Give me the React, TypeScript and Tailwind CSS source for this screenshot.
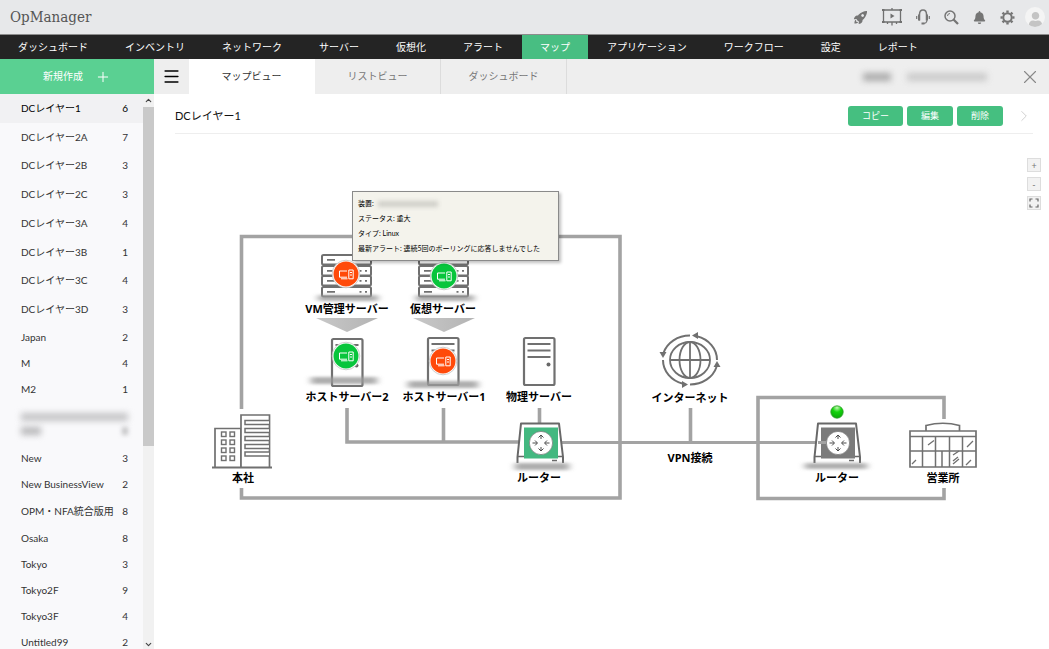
import { useState } from 'react';
import { Menu, Plus, X, ChevronRight, ChevronUp, ChevronDown } from 'lucide-react';
import { FaBell, FaUser } from 'react-icons/fa';
import { IoRocketSharp } from 'react-icons/io5';

const menu = [
  'ダッシュボード',
  'インベントリ',
  'ネットワーク',
  'サーバー',
  '仮想化',
  'アラート',
  'マップ',
  'アプリケーション',
  'ワークフロー',
  '設定',
  'レポート',
];

const tabs = ['マップビュー', 'リストビュー', 'ダッシュボード'];

const layers = [
  { name: 'DCレイヤー1', count: 6 },
  { name: 'DCレイヤー2A', count: 7 },
  { name: 'DCレイヤー2B', count: 3 },
  { name: 'DCレイヤー2C', count: 3 },
  { name: 'DCレイヤー3A', count: 4 },
  { name: 'DCレイヤー3B', count: 1 },
  { name: 'DCレイヤー3C', count: 4 },
  { name: 'DCレイヤー3D', count: 3 },
];

const views = [
  { name: 'Japan', count: 2 },
  { name: 'M', count: 4 },
  { name: 'M2', count: 1 },
  { name: '', count: 0 },
  { name: 'New', count: 3 },
  { name: 'New BusinessView', count: 2 },
  { name: 'OPM・NFA統合版用', count: 8, tall: true },
  { name: 'Osaka', count: 8 },
  { name: 'Tokyo', count: 3 },
  { name: 'Tokyo2F', count: 9 },
  { name: 'Tokyo3F', count: 4 },
  { name: 'Untitled99', count: 2 },
];

// x is the centre of the label, y its top edge
const labels = [
  { text: 'VM管理サーバー', x: 193, y: 167 },
  { text: '仮想サーバー', x: 289, y: 167 },
  { text: 'ホストサーバー2', x: 193, y: 255 },
  { text: 'ホストサーバー1', x: 290, y: 255 },
  { text: '物理サーバー', x: 385, y: 255 },
  { text: 'ルーター', x: 385, y: 336 },
  { text: '本社', x: 89, y: 336 },
  { text: 'インターネット', x: 536, y: 256 },
  { text: 'VPN接続', x: 536, y: 316 },
  { text: 'ルーター', x: 683, y: 336 },
  { text: '営業所', x: 789, y: 336 },
];

type Point = { x: number; y: number };

function PresentationIcon() {
  return (
    <svg width="20" height="18" viewBox="0 0 20 18" fill="none" stroke="#707070" strokeWidth="1.3">
      <path d="M1.500 2h17v12h-17z" />
      <path d="M0 2h2.500M17.500 2H20M0 14h2.500M17.500 14H20" strokeWidth="2" />
      <path d="M8.500 5.500l4 2.500-4 2.500z" fill="#707070" stroke="none" />
      <path d="M5.500 14v2M10 0v2M10 14v3.500M14.500 14v2" />
    </svg>
  );
}

function HeadsetIcon() {
  return (
    <svg width="14" height="16" viewBox="0 0 14 16" fill="none" stroke="#757575" strokeWidth="1.5">
      <path d="M3.500 11.500V5.500C3.500 2.500 5 1 7 1s3.500 1.500 3.500 4.500v6" />
      <path d="M3 5.500v6M11 5.500v6" strokeWidth="2" />
      <path d="M0.700 7v3M13.300 7v3" strokeWidth="1.2" />
      <path d="M11 11.500q-0.500 3-4 3" strokeWidth="1.200" />
      <path d="M5.500 14.500h3" strokeWidth="2" />
    </svg>
  );
}

function SearchIcon() {
  return (
    <svg width="15" height="15" viewBox="0 0 15 15" fill="none" stroke="#757575">
      <circle cx="6" cy="6" r="5" strokeWidth="1.500" />
      <path d="M3.500 6A2.500 2.500 0 0 1 6 3.500" strokeWidth="1" />
      <path d="M9.500 9.500l4.500 4.500" strokeWidth="2.300" />
    </svg>
  );
}

function GearIcon() {
  return (
    <svg width="15" height="15" viewBox="-7.500 -7.500 15 15" fill="none" stroke="#757575">
      <circle r="4.200" strokeWidth="2" />
      {[0, 45, 90, 135, 180, 225, 270, 315].map((angle) => (
        <path key={angle} d="M0 -4.800V-7" strokeWidth="2.400" transform={`rotate(${angle})`} />
      ))}
    </svg>
  );
}

function Rack({ x, y }: Point) {
  return (
    <g transform={`translate(${x} ${y})`} stroke="#707070">
      {[0, 11, 21, 32].map((top) => (
        <g key={top}>
          <rect x="1" y={top + 1} width="49" height="9.5" rx="1.5" fill="#fff" strokeWidth="2" />
          <path d={`M6 ${top + 5.8}h8M38.5 ${top + 5.8}h2M44 ${top + 5.8}h2`} strokeWidth="1.8" />
        </g>
      ))}
    </g>
  );
}

function Tower({ x, y }: Point) {
  return (
    <g transform={`translate(${x} ${y})`} stroke="#707070">
      <rect x="1" y="1" width="30.5" height="47" rx="1.5" fill="#fff" strokeWidth="2.200" />
      <path d="M4.500 7h23M4.500 13.500h23M4.500 20h23" strokeWidth="1.800" />
      <circle cx="25.500" cy="27.500" r="2" fill="#686868" stroke="none" />
    </g>
  );
}

function Status({ x, y, color }: Point & { color: string }) {
  return (
    <g transform={`translate(${x} ${y})`} fill="none" stroke="#fff">
      <circle r="13.800" fill="#fff" stroke="#c2c2c2" strokeWidth="0.800" />
      <circle r="12.500" fill={color} stroke="none" />
      <path d="M1 3.200h-7.500v-6.200H1M-5 4.800h6.500" strokeWidth="1" />
      <path d="M2.800 -4h4.400v8.800H2.800zM4 -1.500h2M4 1h2" strokeWidth="1" />
    </g>
  );
}

function Router({ x, y, color }: Point & { color: string }) {
  return (
    <g transform={`translate(${x} ${y})`} fill="none">
      <path d="M-23.500 20v-6L-20 -19.500h38L22 14v6" fill="#fff" stroke="#686868" strokeWidth="2" strokeLinejoin="round" />
      <path d="M-23 13.500h45M11 17.500h5" stroke="#686868" strokeWidth="1.600" />
      <path d="M-17 -15.500h34v31h-34z" fill={color} />
      <circle r="11.600" fill="#fff" stroke="#777" strokeWidth="0.700" />
      <g stroke="#4a4a4a" strokeWidth="1">
        <path d="M0 -4v-4M-2.500 -5.500L0 -8l2.500 2.500" />
        <path d="M0 4v4M-2.500 5.500L0 8l2.500 -2.500" />
        <path d="M-8.500 0h4.500M-6 -2.500L-3.500 0l-2.500 2.500" />
        <path d="M8.500 0h-4.500M6 -2.500L3.500 0l2.500 2.500" />
      </g>
    </g>
  );
}

function HeadOffice({ x, y }: Point) {
  return (
    <g transform={`translate(${x} ${y})`} fill="#fff" stroke="#707070">
      <path d="M3 53V14.500h26V53" strokeWidth="1.700" />
      <path d="M29 53V1h28.500v52" strokeWidth="1.700" />
      <path d="M0 53.500h60" strokeWidth="2" />
      {[18, 26, 34, 42].map((top) => (
        <g key={top} strokeWidth="1.400">
          <rect x="9.500" y={top} width="4.500" height="4.500" />
          <rect x="18" y={top} width="4.500" height="4.500" />
        </g>
      ))}
      {[6.5, 14.5, 22.5, 30.5, 38].map((top) => (
        <path key={top} d={`M57 ${top}H33v4h24`} strokeWidth="1.5" />
      ))}
    </g>
  );
}

function BranchOffice({ x, y }: Point) {
  return (
    <g transform={`translate(${x} ${y})`} fill="none" stroke="#707070" strokeWidth="1.700">
      <path d="M17 8V2.500Q34 -2 50.500 2.500V8" />
      <path d="M1 8h66v36H1zM1 13.500h66M1 28h66" fill="#fff" />
      <path d="M13.500 13.500V44M26.500 13.500V44M40.500 13.500V44M53.500 13.500V44M33 28v16" strokeWidth="1.500" />
      <path d="M19 22l6 -4.500M58 24l6 -6M3 41l4 -4M44 32l6 -4M44 41l6 -5M44 38l5 -4M57 42l5 -5" strokeWidth="1.300" />
    </g>
  );
}

function Globe({ x, y }: Point) {
  return (
    <g transform={`translate(${x} ${y})`} fill="none" stroke="#707070" strokeWidth="1.800">
      <ellipse rx="20" ry="18" />
      <ellipse rx="10.500" ry="18" />
      <path d="M0 -18v36M-20 0h40" />
      <path
        d="M0 -24.500A27.500 24.500 0 0 0 -26.500 -7M-27 0A27.500 24.500 0 0 0 -7 23.700M0 24.500A27.500 24.500 0 0 0 26.500 7M27 0A27.500 24.500 0 0 0 7 -23.700"
        strokeWidth="2"
      />
      <g fill="#707070" stroke="none">
        <path d="M2 -24.500l6 -3.500v7z" />
        <path d="M-27 -2l-3.500 -6h7z" />
        <path d="M-2 24.500l-6 -3.500v7z" />
        <path d="M27 1l-3.500 6h7z" />
      </g>
    </g>
  );
}

function Topology() {
  return (
    <svg width="895" height="515" viewBox="0 0 895 515" className="absolute top-0 left-0">
      <defs>
        <filter id="soft" x="-20%" y="-100%" width="140%" height="300%">
          <feGaussianBlur stdDeviation="3.500 1.800" />
        </filter>
        <linearGradient id="arrow" x1="0" x2="1" y1="0" y2="0">
          <stop offset="0" stopColor="#c8c8c8" />
          <stop offset="1" stopColor="#b4b4b4" />
        </linearGradient>
        <radialGradient id="lamp" cx="0.500" cy="0.150" r="0.800">
          <stop offset="0" stopColor="#c5f7b5" />
          <stop offset="0.450" stopColor="#14d40c" />
          <stop offset="1" stopColor="#0cab0a" />
        </radialGradient>
      </defs>

      {/* site borders */}
      <g fill="none" stroke="#a3a3a3" strokeWidth="3.600">
        <path d="M87.500 275V102.500H466V364H87.500V354" />
        <path d="M790 285V263.500H604V364.500H790V354" />
      </g>

      {/* links */}
      <g fill="none" stroke="#a3a3a3" strokeWidth="3.600">
        <path d="M193 274V308H365M289.500 274V308M385.500 274V290M536.500 274V308" />
        <path d="M405 308.500H668" strokeWidth="3" />
      </g>

      <Rack x={167} y={120} />
      <Rack x={264} y={120} />
      <path d="M162 184h62l-31 14z" fill="url(#arrow)" />
      <path d="M259 184h62l-31 14z" fill="url(#arrow)" />
      <Tower x={177} y={204} />
      <Tower x={273} y={203} />
      <Tower x={369} y={203} />

      <Router x={387} y={309} color="#43b880" />
      <Router x={684} y={309} color="#7b7b7b" />
      <path d="M664 308.500H672" stroke="#a3a3a3" strokeWidth="3" />
      <HeadOffice x={58} y={280} />
      <BranchOffice x={755} y={289} />
      <Globe x={536} y={226} />
      <circle cx="683" cy="278" r="6.200" fill="url(#lamp)" stroke="#2f9c2a" strokeWidth="0.800" />

      {/* masked device names */}
      <g fill="#9a9a9a" filter="url(#soft)" opacity="0.800">
        <rect x="164" y="161" width="60" height="6" />
        <rect x="262" y="161" width="58" height="6" />
        <rect x="157" y="243" width="66" height="7" />
        <rect x="254" y="247" width="70" height="7" />
        <rect x="361" y="329" width="54" height="7" />
        <rect x="651" y="329" width="62" height="6" />
      </g>

      <Status x={192} y={140} color="#ff4a0a" />
      <Status x={290} y={142} color="#08c53c" />
      <Status x={192} y={222} color="#08c53c" />
      <Status x={289} y={227} color="#ff4a0a" />
    </svg>
  );
}

export default function App() {
  const [tab, setTab] = useState(tabs[0]);
  const [selected, setSelected] = useState(layers[0].name);

  return (
    <div className="flex h-screen flex-col overflow-hidden bg-white font-['Lato','Noto_Sans_CJK_JP',sans-serif] text-[10px] text-[#333]">
      <header className="flex h-[35px] shrink-0 items-center justify-between border-b border-[#8c8c8c] bg-[#e7e8ea] pr-1 pl-2.5">
        <h1 className="font-['DejaVu_Serif_Condensed','DejaVu_Serif',serif] text-[15px] leading-none text-[#555]">OpManager</h1>
        <div className="flex items-center gap-3.5 text-[#757575]">
          <button aria-label="Quick start"><IoRocketSharp size={15} /></button>
          <button aria-label="Presentation"><PresentationIcon /></button>
          <button aria-label="Support"><HeadsetIcon /></button>
          <button aria-label="Search"><SearchIcon /></button>
          <button aria-label="Alarms"><FaBell size={13} /></button>
          <button aria-label="Settings"><GearIcon /></button>
          <button
            aria-label="Account"
            className="-ml-1 flex size-5 items-end justify-center overflow-hidden rounded-full bg-[#f4f4f4] text-[#c4c4c4]"
          >
            <FaUser size={15} />
          </button>
        </div>
      </header>

      <nav className="flex h-6 shrink-0 gap-px bg-[#242424] text-white">
        {menu.map((item) => (
          <a
            key={item}
            href="#"
            className={`flex items-center px-[18px] whitespace-nowrap ${item === 'マップ' ? 'bg-[#48be82]' : ''}`}
          >
            {item}
          </a>
        ))}
      </nav>

      <div className="flex min-h-0 flex-1">
        <aside className="flex w-[154px] shrink-0 flex-col">
          <button className="flex h-[35px] shrink-0 items-center justify-center gap-3 bg-[#5ad092] text-white">
            新規作成
            <Plus size={16} strokeWidth={1.5} />
          </button>
          <div className="flex min-h-0 flex-1">
            <div className="min-w-0 flex-1 overflow-hidden bg-[#f9f9fb]">
              <ul className="grid h-[230px] auto-rows-fr">
                {layers.map((item) => (
                  <li key={item.name} className="flex">
                    <button
                      onClick={() => setSelected(item.name)}
                      className={`flex flex-1 items-center justify-between pr-[15px] pl-[21px] ${
                        selected === item.name ? 'bg-[#f1f1f3] text-black' : ''
                      }`}
                    >
                      <span>{item.name}</span>
                      <span>{item.count}</span>
                    </button>
                  </li>
                ))}
              </ul>
              <ul>
                {views.map((item) =>
                  item.name ? (
                    <li key={item.name}>
                      <button
                        onClick={() => setSelected(item.name)}
                        className={`flex w-full items-center justify-between pr-[15px] pl-[21px] whitespace-nowrap ${
                          item.tall ? 'h-7' : 'h-[26px]'
                        }`}
                      >
                        <span>{item.name}</span>
                        <span>{item.count}</span>
                      </button>
                    </li>
                  ) : (
                    <li key="masked" className="flex h-[43px] flex-col justify-center gap-1.5 pr-[15px] pl-[21px]">
                      <div className="h-2 bg-[#c4c4c6] blur-[3px]" />
                      <div className="flex justify-between">
                        <div className="h-2 w-5 bg-[#b8b8ba] blur-[3px]" />
                        <div className="h-2 w-1.5 bg-[#c4c4c6] blur-[2px]" />
                      </div>
                    </li>
                  ),
                )}
              </ul>
            </div>
            <div className="flex w-[11px] shrink-0 flex-col items-center bg-[#f1f1f1] text-[#444]">
              <ChevronUp size={9} strokeWidth={3} className="my-0.5 shrink-0" />
              <div className="w-full flex-[340] bg-[#c9c9c9]" />
              <div className="flex-[194]" />
              <ChevronDown size={9} strokeWidth={3} className="shrink-0" />
            </div>
          </div>
        </aside>

        <main className="flex min-w-0 flex-1 flex-col">
          <div className="flex h-[35px] shrink-0 items-stretch bg-[#eee]">
            <button aria-label="Menu" className="flex w-[35px] items-center justify-center text-black">
              <Menu size={19} strokeWidth={2} />
            </button>
            {tabs.map((name) => (
              <button
                key={name}
                onClick={() => setTab(name)}
                className={`w-[126px] border-r ${
                  tab === name ? 'border-white bg-white text-[#333]' : 'border-[#dcdcdc] text-[#777]'
                }`}
              >
                {name}
              </button>
            ))}
            <div className="ml-auto flex items-center gap-4 pr-2">
              <div className="h-2 w-7 bg-[#ababab] blur-[3px]" />
              <div className="h-2 w-20 bg-[#cacaca] blur-[3px]" />
              <button aria-label="Close" className="ml-4 text-[#888]">
                <X size={22} strokeWidth={1.2} />
              </button>
            </div>
          </div>

          <div className="mr-4 ml-[21px] flex h-10 shrink-0 items-center justify-between border-b border-[#eee]">
            <h2 className="pt-1.5 text-[11px] text-[#111]">DCレイヤー1</h2>
            <div className="flex items-center gap-1 pt-1 text-[9px] text-white">
              <button className="h-5 rounded-[3px] bg-[#45bf80] px-3.5">コピー</button>
              <button className="h-5 rounded-[3px] bg-[#45bf80] px-3.5">編集</button>
              <button className="h-5 rounded-[3px] bg-[#45bf80] px-3.5">削除</button>
              <button aria-label="Next" className="ml-2 text-[#ccc]">
                <ChevronRight size={18} strokeWidth={1.2} />
              </button>
            </div>
          </div>

          <div className="relative min-h-0 flex-1 overflow-hidden">
            <Topology />
            {labels.map((label) => (
              <span
                key={`${label.text}-${label.x}`}
                className="absolute -translate-x-1/2 font-['Open_Sans','Noto_Sans_CJK_JP',sans-serif] text-[11px] leading-4 font-bold whitespace-nowrap text-black"
                style={{ left: label.x, top: label.y }}
              >
                {label.text}
              </span>
            ))}

            <div
              role="tooltip"
              className="absolute top-[57px] left-[198px] w-[207px] border border-[#8a8a8a] bg-[#f4f3ec] px-[5px] py-1 text-[7px] leading-[15px] whitespace-nowrap text-black shadow-[2px_2px_3px_rgba(0,0,0,0.25)]"
            >
              <div className="flex items-center gap-1">
                装置:
                <span className="h-1.5 w-15 bg-[#d0cfc9] blur-[2px]" />
              </div>
              <div>ステータス: 重大</div>
              <div>タイプ: Linux</div>
              <div>最新アラート: 連続5回のポーリングに応答しませんでした</div>
            </div>

            <div className="absolute top-6 right-2 flex flex-col gap-[5px] text-[9px] leading-none text-[#777]">
              <button className="size-3.5 border border-[#ddd] bg-[#f2f2f2]">+</button>
              <button className="size-3.5 border border-[#ddd] bg-[#f2f2f2]">-</button>
              <button aria-label="Full screen" className="flex size-3.5 items-center justify-center border border-[#ddd] bg-[#f2f2f2]">
                <svg width="10" height="10" viewBox="0 0 10 10" fill="none" stroke="#666" strokeWidth="1.200">
                  <path d="M1 3.500V1h2.500M6.500 1H9v2.500M9 6.500V9H6.500M3.500 9H1V6.500" />
                </svg>
              </button>
            </div>
          </div>
        </main>
      </div>
    </div>
  );
}
